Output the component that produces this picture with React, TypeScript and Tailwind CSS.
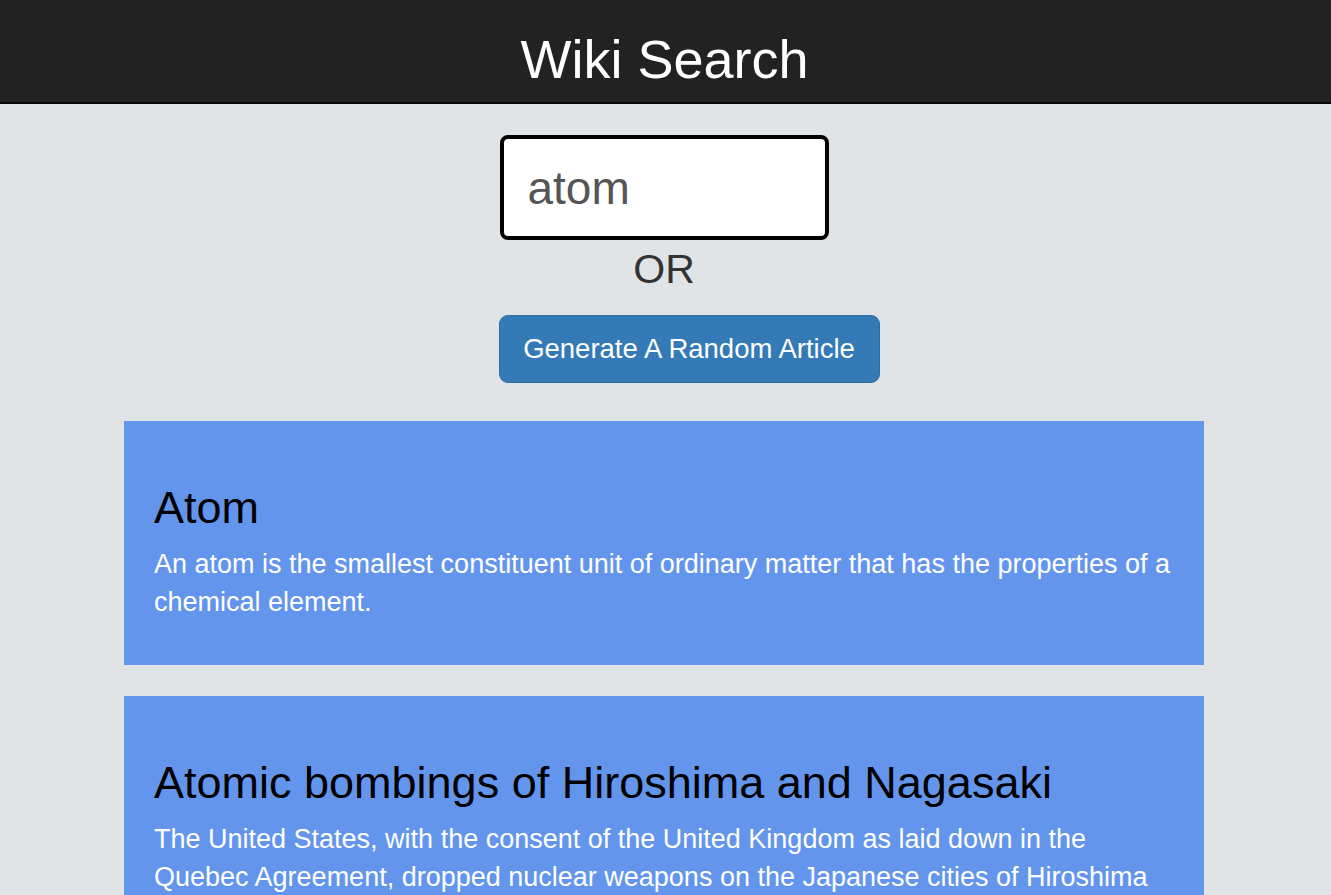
import React from "react";

const results = [
  {
    title: "Atom",
    extract:
      "An atom is the smallest constituent unit of ordinary matter that has the properties of a chemical element.",
  },
  {
    title: "Atomic bombings of Hiroshima and Nagasaki",
    extract:
      "The United States, with the consent of the United Kingdom as laid down in the Quebec Agreement, dropped nuclear weapons on the Japanese cities of Hiroshima and Nagasaki in August 1945, during the final stage of World War II. The two bombings killed at least 129,000 people, most of whom were civilians.",
  },
];

export default function App() {
  return (
    <div className="min-h-screen bg-[#e0e4e7] font-['Liberation_Sans',Arial,sans-serif]">
      <div className="h-[104px] bg-[#222222] border-b-2 border-[#080808] pt-[32px] pr-[2px] flex justify-center">
        <h1 className="text-[54px] leading-none text-white">Wiki Search</h1>
      </div>

      <div className="pr-[3px]">
        <div className="flex flex-col items-center">
          <input
            defaultValue="atom"
            className="mt-[31px] w-[329px] h-[105px] bg-white border-4 border-black rounded-[8px] pl-[24px] text-[46px] text-[#555555] outline-none"
          />
          <div className="mt-[9px] text-[41px] leading-none text-[#333333]">OR</div>
          <div className="w-[329px] mt-[25px]">
            <button className="w-[381px] whitespace-nowrap ml-[-1px] h-[68px] bg-[#337ab7] border-[1.5px] border-[#2e6da4] rounded-[9px] text-[27.5px] text-white text-center">
              Generate A Random Article
            </button>
          </div>
        </div>

        <div className="w-[1080px] mx-auto mt-[38px] flex flex-col gap-[31px] pb-10">
          {results.map((r) => (
            <div key={r.title} className="bg-[#6495ed] pt-[62px] pb-[44px] px-[30px]">
              <h2 className="text-[45px] leading-[49px] text-black">{r.title}</h2>
              <p className="mt-[13px] text-[27px] leading-[38px] text-white">{r.extract}</p>
            </div>
          ))}
        </div>
      </div>
    </div>
  );
}
